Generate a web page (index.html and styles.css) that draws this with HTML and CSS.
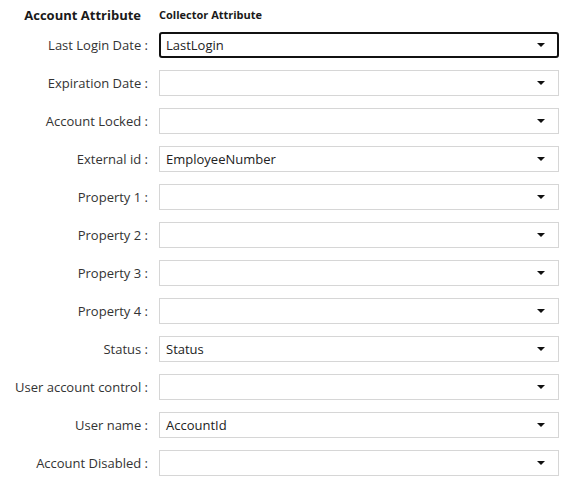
FILE: index.html
```html
<!DOCTYPE html>
<html>
<head>
<meta charset="utf-8">
<link rel="stylesheet" href="styles.css">
</head>
<body>
<div class="form">
  <div class="head-left">Account Attribute</div>
  <div class="head-right">Collector Attribute</div>

  <label class="lbl">Last Login Date :</label>
  <div class="sel focus"><span class="val">LastLogin</span><span class="caret"></span></div>

  <label class="lbl">Expiration Date :</label>
  <div class="sel"><span class="val"></span><span class="caret"></span></div>

  <label class="lbl">Account Locked :</label>
  <div class="sel"><span class="val"></span><span class="caret"></span></div>

  <label class="lbl">External id :</label>
  <div class="sel"><span class="val">EmployeeNumber</span><span class="caret"></span></div>

  <label class="lbl">Property 1 :</label>
  <div class="sel"><span class="val"></span><span class="caret"></span></div>

  <label class="lbl">Property 2 :</label>
  <div class="sel"><span class="val"></span><span class="caret"></span></div>

  <label class="lbl">Property 3 :</label>
  <div class="sel"><span class="val"></span><span class="caret"></span></div>

  <label class="lbl">Property 4 :</label>
  <div class="sel"><span class="val"></span><span class="caret"></span></div>

  <label class="lbl">Status :</label>
  <div class="sel"><span class="val">Status</span><span class="caret"></span></div>

  <label class="lbl">User account control :</label>
  <div class="sel"><span class="val"></span><span class="caret"></span></div>

  <label class="lbl">User name :</label>
  <div class="sel"><span class="val">AccountId</span><span class="caret"></span></div>

  <label class="lbl">Account Disabled :</label>
  <div class="sel"><span class="val"></span><span class="caret"></span></div>
</div>
</body>
</html>
```
FILE: styles.css
```css
html, body {
  margin: 0;
  padding: 0;
  background: #ffffff;
}
body {
  font-family: "Open Sans", "DejaVu Sans", sans-serif;
  color: #333333;
}
.form {
  display: grid;
  grid-template-columns: 148px 400px;
  grid-template-rows: 15px;
  grid-auto-rows: 26px;
  column-gap: 11px;
  row-gap: 12px;
  padding: 5px 0 0 0;
}
.head-left,
.head-right {
  font-weight: 700;
  color: #1a1a1a;
  line-height: 20px;
  white-space: nowrap;
}
.head-left {
  font-size: 13px;
  text-align: right;
  padding-right: 7px;
}
.head-right {
  font-size: 11px;
}
.lbl {
  font-size: 13px;
  text-align: right;
  line-height: 26px;
  white-space: nowrap;
  color: #333333;
}
.sel {
  box-sizing: border-box;
  border: 1px solid #d6d6d6;
  display: flex;
  align-items: center;
  padding: 0 13px 0 6px;
  font-size: 13px;
  color: #222222;
}
.sel.focus {
  border: 2px solid #111111;
  border-radius: 3px;
  padding-left: 5px;
  padding-right: 12px;
}
.val {
  flex: 1;
}
.caret {
  width: 0;
  height: 0;
  border-left: 4px solid transparent;
  border-right: 4px solid transparent;
  border-top: 4px solid #111111;
}
```
